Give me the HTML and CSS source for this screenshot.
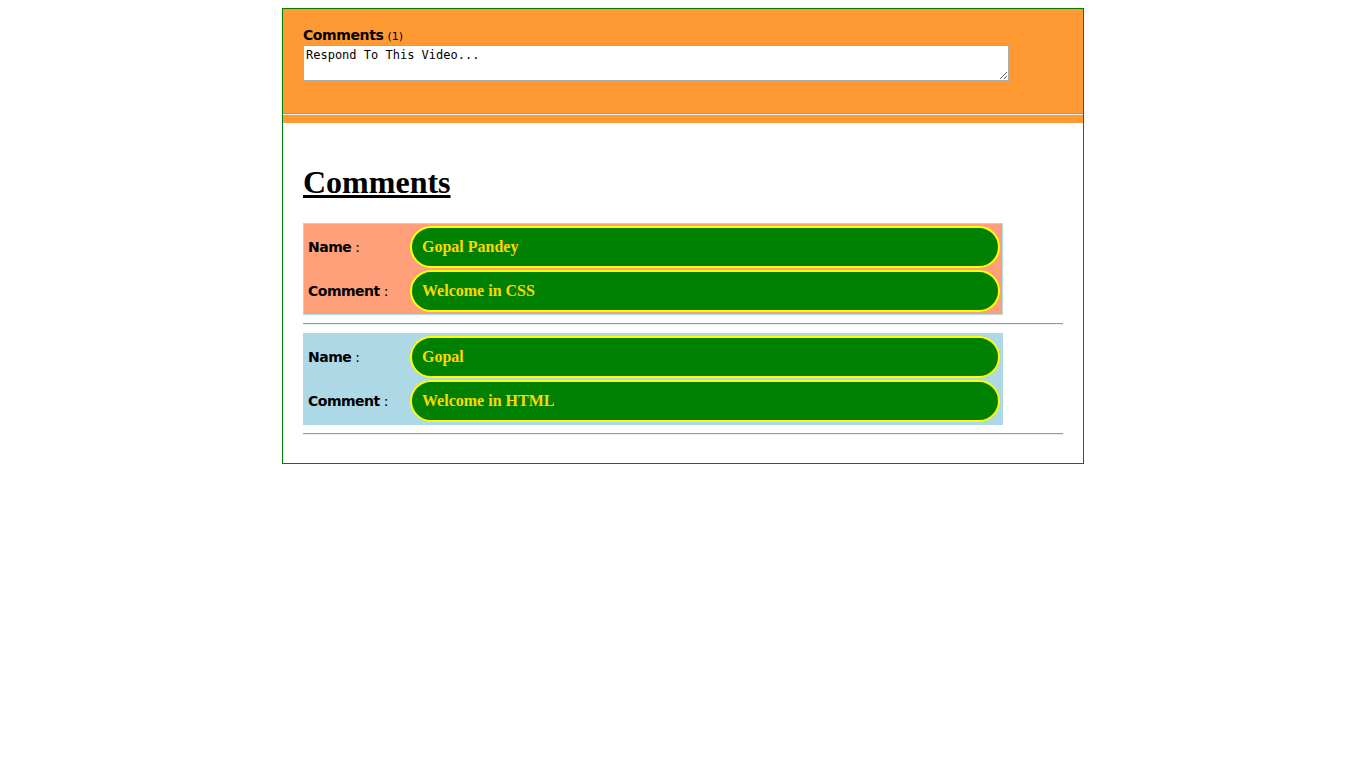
FILE: index.html
```html
<!DOCTYPE html>
<html>
<head>
<meta charset="utf-8">
<title>Comments</title>
<link rel="stylesheet" href="styles.css">
</head>
<body>
<div class="wrap">
  <div class="top">
    <div class="form">
      <div class="form-label"><b>Comments</b> <span class="count">(1)</span></div>
      <textarea class="box">Respond To This Video...</textarea>
    </div>
    <hr class="rule">
  </div>
  <div class="content">
    <h1 class="title">Comments</h1>
    <div class="entry salmon">
      <div class="lbl"><b>Name</b> :</div>
      <div class="pill">Gopal Pandey</div>
      <div class="lbl"><b>Comment</b> :</div>
      <div class="pill">Welcome in CSS</div>
    </div>
    <hr class="rule">
    <div class="entry blue">
      <div class="lbl"><b>Name</b> :</div>
      <div class="pill">Gopal</div>
      <div class="lbl"><b>Comment</b> :</div>
      <div class="pill">Welcome in HTML</div>
    </div>
    <hr class="rule">
  </div>
</div>
</body>
</html>
```

FILE: styles.css
```css
body {
  margin: 8px;
  font-family: "Liberation Serif", serif;
}
.wrap {
  width: 800px;
  margin: 0 auto;
  border: 1px solid #008000;
}
.top {
  background: #ff9933;
  padding-bottom: 8px;
}
.form {
  padding: 17px 20px 24px;
}
.form-label {
  font-family: "DejaVu Sans", sans-serif;
  font-size: 14px;
  letter-spacing: -0.4px;
  line-height: 19px;
  height: 19px;
  color: #000;
  white-space: nowrap;
}
.form-label b {
  font-weight: bold;
}
.count {
  font-size: 11px;
  letter-spacing: 0;
}
.box {
  display: block;
  box-sizing: border-box;
  width: 706px;
  height: 36px;
  margin: 0;
  padding: 2px;
  border: 1px solid #a9a9a9;
  font-family: "DejaVu Sans Mono", monospace;
  font-size: 12px;
  color: #000;
  background: #fff;
}
.rule {
  margin: 8px 0 0;
  height: 0;
  border: 0;
  border-top: 1px solid #9a9a9a;
  border-bottom: 1px solid #eeeeee;
}
.content {
  padding: 0 20px 20px;
}
.content .rule {
  margin: 8px 0;
}
.title {
  font-size: 32px;
  font-weight: bold;
  text-decoration: underline;
  margin: 41px 0 22px;
  line-height: 37px;
}
.entry {
  width: 700px;
  box-sizing: border-box;
  border: 1px solid #add8e6;
  padding: 2px;
  display: grid;
  grid-template-columns: 102px 590px;
  gap: 2px;
}
.salmon { background: #ffa07a; }
.blue { background: #add8e6; }
.lbl {
  font-family: "DejaVu Sans", sans-serif;
  font-size: 14px;
  letter-spacing: -0.5px;
  padding-left: 2px;
  display: flex;
  align-items: center;
  color: #000;
}
.lbl b {
  font-weight: bold;
  margin-right: 4px;
}
.pill {
  box-sizing: border-box;
  height: 42px;
  background: #008000;
  border: 2px solid #ffff00;
  border-radius: 21px;
  padding-left: 10px;
  display: flex;
  align-items: center;
  color: #ffd700;
  font-weight: bold;
  font-size: 16px;
}
```
